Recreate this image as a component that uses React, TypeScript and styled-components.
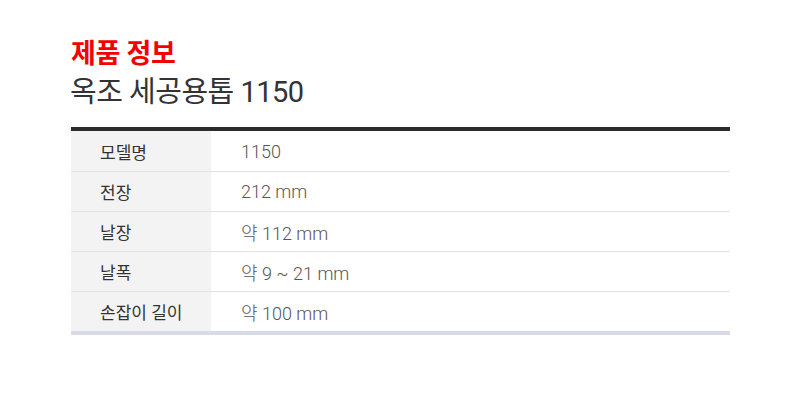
import React from 'react';
import styled, { createGlobalStyle } from 'styled-components';

const GlobalStyle = createGlobalStyle`
  body {
    margin: 0;
    background: #fff;
    font-family: Roboto, 'Noto Sans CJK KR', sans-serif;
  }
`;

const Page = styled.div`
  width: 800px;
  height: 404px;
  padding: 36px 70px 0 71px;
  box-sizing: border-box;
`;

const Heading = styled.h2`
  margin: 0;
  font-size: 27px;
  font-weight: 700;
  line-height: 36px;
  color: #f50000;
  letter-spacing: -0.3px;
`;

const Name = styled.h1`
  margin: 0 0 0 -1px;
  font-size: 29px;
  font-weight: 400;
  line-height: 40px;
  color: #333;
  letter-spacing: -0.5px;
`;

const Table = styled.div`
  width: 659px;
  margin-top: 15px;
  border-top: 4px solid #2b2b2b;
  border-bottom: 4px solid #d6dbe5;
`;

const Row = styled.div`
  display: grid;
  grid-template-columns: 140px 1fr;
  height: 40px;
  box-sizing: border-box;
  & + & {
    border-top: 1px solid #dfe2e8;
  }
`;

const Label = styled.div`
  display: flex;
  align-items: center;
  padding-left: 29px;
  background: #f3f3f3;
  font-size: 17px;
  color: #333;
`;

const Value = styled.div`
  display: flex;
  align-items: center;
  padding-left: 30px;
  font-size: 18px;
  font-weight: 300;
  color: #555;
`;

const specs: [string, string][] = [
  ['모델명', '1150'],
  ['전장', '212 mm'],
  ['날장', '약 112 mm'],
  ['날폭', '약 9 ~ 21 mm'],
  ['손잡이 길이', '약 100 mm'],
];

export default function App() {
  return (
    <Page>
      <GlobalStyle />
      <Heading>제품 정보</Heading>
      <Name>옥조 세공용톱 1150</Name>
      <Table>
        {specs.map(([k, v]) => (
          <Row key={k}>
            <Label>{k}</Label>
            <Value>{v}</Value>
          </Row>
        ))}
      </Table>
    </Page>
  );
}
